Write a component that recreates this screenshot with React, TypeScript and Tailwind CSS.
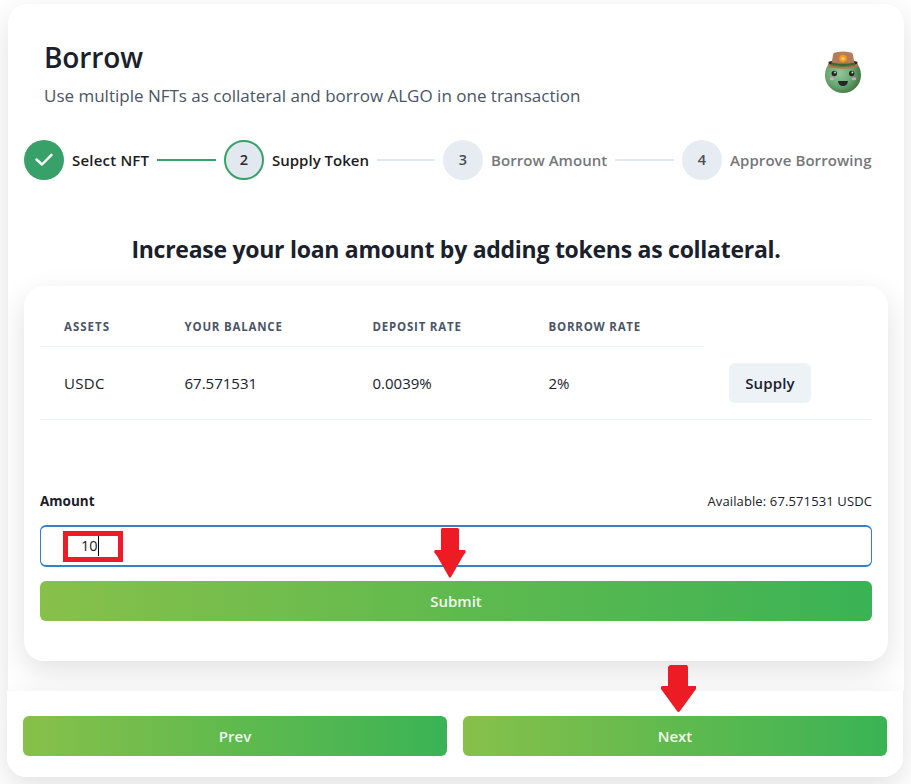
import React from "react";

const steps = [
  { n: "1", title: "Select NFT", state: "done", box: "w-[77px]", text: "tracking-[0.2px]" },
  { n: "2", title: "Supply Token", state: "active", box: "w-[97px]", text: "tracking-normal" },
  { n: "3", title: "Borrow Amount", state: "todo", box: "w-[116px]", text: "tracking-[0.05px]" },
  { n: "4", title: "Approve Borrowing", state: "todo", box: "w-[142px]", text: "tracking-[0.08px]" },
];

function Avatar() {
  return (
    <svg width="38" height="43" viewBox="0 0 38 43">
      <defs>
        <radialGradient id="face" cx="0.4" cy="0.45" r="0.6">
          <stop offset="0" stopColor="#8fc998" />
          <stop offset="0.6" stopColor="#6ba672" />
          <stop offset="1" stopColor="#427843" />
        </radialGradient>
      </defs>
      <circle cx="19" cy="24" r="18" fill="url(#face)" />
      <path d="M4.500 11Q5 10 8 10.200L30 10.200Q33 10 33.500 11L33 15Q19 18 5 15Z" fill="#33251f" />
      <path d="M9 4Q9.500 1.200 12.500 1.200Q19 -0.200 25.500 1.200Q28.500 1.200 29 4L30.500 13Q19 15.500 7.500 13Z" fill="#b57c57" />
      <path d="M8 11.500Q19 14 30 11.500L31 14Q19 16.500 7 14Z" fill="#356b38" />
      <path d="M4 12.800Q19 17.500 34 12.800Q34.500 15.800 31 16.800Q19 18.500 7 16.800Q3.500 15.800 4 12.800Z" fill="#b8754d" />
      <path d="M7 13.500Q19 16.800 31 13.500V14.800Q19 17 7 14.800Z" fill="#4b7a3e" />
      <circle cx="19" cy="7.500" r="3.800" fill="#f59a1c" />
      <circle cx="19" cy="7.500" r="1.600" fill="#ffd17a" />
      <circle cx="10.300" cy="22.500" r="2.700" fill="#262626" />
      <circle cx="27.700" cy="22.500" r="2.700" fill="#262626" />
      <circle cx="11" cy="21.500" r="0.900" fill="#dfe8df" />
      <circle cx="28.400" cy="21.500" r="0.900" fill="#dfe8df" />
      <ellipse cx="8" cy="27.700" rx="2.200" ry="1.500" fill="#dba0c4" />
      <ellipse cx="30" cy="27.700" rx="2.200" ry="1.500" fill="#dba0c4" />
      <path d="M14 30H24Q23.500 35 19 35Q14.500 35 14 30Z" fill="#262626" />
    </svg>
  );
}

function Stepper() {
  return (
    <div className="mt-[31px] flex items-center pl-4">
      {steps.map((s, i) => (
        <React.Fragment key={s.n}>
          <div
            className={
              "flex size-10 shrink-0 items-center justify-center rounded-full text-[14.5px] font-semibold " +
              (s.state === "done"
                ? "bg-[#38a169]"
                : s.state === "active"
                  ? "border-2 border-[#38a169] bg-[#e2e8f0] text-[#2b2b2b]"
                  : "bg-[#e7ecf3] text-[#4c4d50]")
            }
          >
            {s.state === "done" ? (
              <svg width="18" height="14" viewBox="0 0 18 14" fill="none" stroke="#fff" strokeWidth="2.4" strokeLinecap="round" strokeLinejoin="round">
                <path d="M1.500 6.500L7 11.500L16.500 1.800" />
              </svg>
            ) : (
              s.n
            )}
          </div>
          <div className={"ml-2 shrink-0 whitespace-nowrap text-[15px] font-semibold leading-6 " + s.box + " " + s.text + (s.state === "todo" ? " text-[#76777a]" : " text-[#1d1d1f]")}>
            {s.title}
          </div>
          {i < 3 && <div className={"mx-2 h-0.5 " + (i === 0 ? "w-[59px] bg-[#38a169]" : i === 1 ? "w-[58px] bg-[#e2e8f0]" : "w-[59px] bg-[#e2e8f0]")} />}
        </React.Fragment>
      ))}
    </div>
  );
}

function Arrow({ w, h, d }: { w: number; h: number; d: string }) {
  return (
    <svg width={w} height={h} viewBox={`0 0 ${w} ${h}`} fill="#ed1c24">
      <path d={d} />
    </svg>
  );
}

const gradient = "bg-linear-to-r from-[#87c04a] via-[#5fba4e] to-[#39b355] font-semibold text-[15px] text-[#f1f9ee] rounded-[6px] h-10 flex items-center justify-center";

export default function App() {
  return (
    <div className="h-[784px] w-[911px] overflow-hidden bg-white pt-1 font-['Open_Sans','Noto_Sans',sans-serif] text-[#1a202c]">
      <div className="h-[687px] pl-2">
        <div className="h-full w-[896px] rounded-t-[20px] bg-white shadow-[0_10px_30px_rgba(0,0,0,0.12)]">
          <div className="h-full overflow-hidden">
            <header className="flex justify-between pl-9 pr-[42px] pt-[34px]">
              <div>
                <h1 className="text-[28px] font-semibold leading-[38px] tracking-[-0.1px]">Borrow</h1>
                <p className="mt-[7px] whitespace-nowrap text-[17px] leading-[26px] text-[#4a5568]">
                  Use multiple NFTs as collateral and borrow ALGO in one transaction
                </p>
              </div>
              <div className="mt-[13px]">
                <Avatar />
              </div>
            </header>
            <Stepper />
            <h2 className="mt-[53px] whitespace-nowrap text-center text-[23px] font-bold leading-8 tracking-[-0.27px]">
              Increase your loan amount by adding tokens as collateral.
            </h2>
            <section className="mx-4 mt-[21px] h-[375px] rounded-[20px] bg-white px-4 pt-6 shadow-[0_10px_30px_rgba(0,0,0,0.12)]">
              <div className="grid h-[37px] w-[664px] grid-cols-[120.500px_188px_176px_179.500px] border-b border-[#edf2f7] pt-[9px] text-[11.500px] font-bold leading-4 tracking-[0.78px] text-[#4a5568]">
                <div className="pl-6 tracking-[1px]">ASSETS</div>
                <div className="pl-6">YOUR BALANCE</div>
                <div className="pl-6">DEPOSIT RATE</div>
                <div className="pl-6">BORROW RATE</div>
              </div>
              <div className="grid h-[73px] grid-cols-[120.500px_188px_176px_179.500px_1fr] items-center border-b border-[#edf2f7] text-[15px]">
                <div className="pl-6 tracking-[0.3px]">USDC</div>
                <div className="pl-6">67.571531</div>
                <div className="pl-6">0.0039%</div>
                <div className="pl-6">2%</div>
                <div className="pl-6">
                  <div className="ml-[1px] flex h-10 w-[82px] items-center justify-center rounded-[6px] bg-[#edf2f7] font-semibold tracking-[0.15px]">Supply</div>
                </div>
              </div>
              <div className="mt-[71px] flex justify-between text-[13px] leading-5">
                <span className="text-[13.5px] font-bold">Amount</span>
                <span className="tracking-[0.12px]">Available: 67.571531 USDC</span>
              </div>
              <div className="relative mt-3.5 flex h-[42px] items-center rounded-[6px] border-x border-y-2 border-[#3182ce] pl-[22px]">
                <div className="flex h-[31px] w-[60px] items-center border-[5px] border-[#ed1c24] pl-[13px] text-[14.5px]">
                  10<span className="h-5 w-px bg-black" />
                </div>
                <div className="absolute left-[393px] top-[1px]">
                  <Arrow w={32} h={50} d="M8 0H24L25 1V22H31L32 24L29 28L17 49Q16 50.500 15 49L3 28L0 24L1 22H7V1Z" />
                </div>
              </div>
              <div className={"mt-3.5 " + gradient}>Submit</div>
            </section>
          </div>
        </div>
      </div>
      <footer className="relative ml-[7px] h-[86px] w-[896px]">
        <div className="absolute inset-0 rounded-b-[20px] shadow-[0_10px_30px_rgba(0,0,0,0.12)]" />
        <div className="relative flex h-full gap-4 rounded-b-[20px] bg-white px-4 pt-[25px]">
          <div className={"w-[424px] " + gradient}>Prev</div>
          <div className={"w-[424px] " + gradient}>Next</div>
        </div>
        <div className="absolute left-[654px] top-[-26px]">
          <Arrow w={35} h={47} d="M9 0H26L27 2V21H35V24L19 46Q17.500 48 16 46L0 24V22L1 21H7V2Z" />
        </div>
      </footer>
    </div>
  );
}
